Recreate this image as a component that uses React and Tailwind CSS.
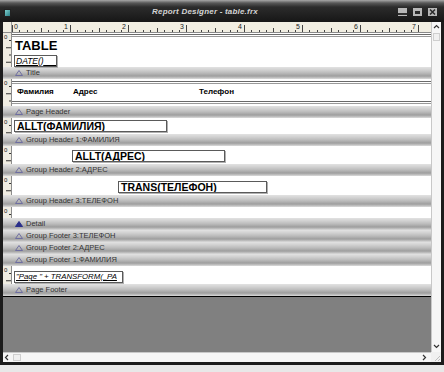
import React from "react";

const BAR =
  "bg-[linear-gradient(to_bottom,#e2e2e2_0%,#d0d0d0_25%,#bababa_50%,#9e9e9e_75%,#c6c6c6_92%,#dcdcdc_100%)]";

// vertical ruler piece at the left of every white band
function VRuler({ h }) {
  const ticks = [];
  for (let y = 7; y < h; y += 7.25) ticks.push(y);
  return (
    <div className="w-[9px] shrink-0 bg-[#efece2] border-r border-[#8c8c8c]">
      <svg width="8" height={h} className="block">
        <text x="1" y="6" fontSize="6" fontFamily="Liberation Sans, sans-serif" fill="#222">
          0
        </text>
        {ticks.map((y, i) => (
          <line key={i} x1={i % 2 ? 3 : 6} x2="8" y1={y + 0.5} y2={y + 0.5} stroke="#333" strokeWidth="1" />
        ))}
      </svg>
    </div>
  );
}

function Section({ h, className, children }) {
  return (
    <div className={`flex ${className}`}>
      <VRuler h={h} />
      <div className="flex-1 bg-white relative flex flex-col">{children}</div>
    </div>
  );
}

function Band({ label, filled }) {
  return (
    <div className={`h-[12px] flex items-center pl-[12px] ${BAR}`}>
      <svg width="8" height="6" className="mr-[3px]">
        <polygon
          points="4,0.5 7.5,5.5 0.5,5.5"
          fill={filled ? "#2a2f8a" : "none"}
          stroke={filled ? "#2a2f8a" : "#6e6ea0"}
          strokeWidth="1"
        />
      </svg>
      <span className="text-[7.5px] leading-none text-[#333]">{label}</span>
    </div>
  );
}

function Field({ className, children, italic }) {
  return (
    <div
      className={`h-[12px] border border-[#5a5a5a] shadow-[1px_1px_0_#b0b0b0] flex items-center pl-[1px] overflow-hidden ${className}`}
    >
      <span
        className={`leading-none underline text-black whitespace-nowrap ${
          italic ? "italic text-[7.8px] font-normal" : "text-[10.5px] font-bold pl-[1px]"
        }`}
      >
        {children}
      </span>
    </div>
  );
}

function Ruler() {
  const ticks = [];
  for (let i = 0; i <= 58; i++) {
    const x = 9 + i * 7.25;
    if (x > 418) break;
    const kind = i % 8 === 0 ? 3 : i % 4 === 0 ? 2 : 1;
    ticks.push({ x, kind });
  }
  return (
    <div className="h-[11px] bg-[#f1eee2] border-b border-[#8a8a8a]">
      <svg width="428" height="10" className="block">
        <line x1="8.5" y1="0" x2="8.5" y2="10" stroke="#9a9a9a" />
        {ticks.map((t, i) => (
          <line
            key={i}
            x1={Math.round(t.x) + 0.5}
            x2={Math.round(t.x) + 0.5}
            y1={t.kind === 3 ? 3 : t.kind === 2 ? 6 : 8}
            y2="10"
            stroke="#444"
          />
        ))}
        {[0, 1, 2, 3, 4, 5, 6, 7].map((n) => (
          <text
            key={n}
            x={n === 0 ? 11 : 9 + n * 58 - 6}
            y="7"
            fontSize="7"
            fontFamily="Liberation Sans, sans-serif"
            fill="#222"
          >
            {n}
          </text>
        ))}
      </svg>
    </div>
  );
}

export default function App() {
  return (
    <div className="w-[444px] h-[372px] bg-[#e8e8e8] overflow-hidden font-['Liberation_Sans',Arial,sans-serif]">
      {/* title bar */}
      <div className="h-[22px] flex items-center bg-[linear-gradient(to_bottom,#a8a8a8_0px,#585858_3px,#2c2c2c_7px,#161616_22px)]">
        <div className="ml-[4px] mt-[3px] w-[7px] h-[8px] border border-[#222] bg-[linear-gradient(135deg,#7fd0cf,#2a7f86)]" />
        <div className="flex-1 pl-[141px] pt-[2px] text-[8px] font-bold italic tracking-[0.2px] text-[#d4d4d4]">
          Report Designer - table.frx
        </div>
        <div className="flex items-center gap-[6px] mr-[7px] mt-[2px]">
          <div className="w-[9px] h-[8px] bg-[#b8b8b8] flex flex-col justify-end">
            <div className="h-[2px] bg-[#303030] mb-[1px]" />
          </div>
          <div className="w-[9px] h-[8px] bg-[#b8b8b8] p-[2px] pt-[3px]">
            <div className="w-full h-full bg-[#2a2a2a]" />
          </div>
          <svg width="9" height="8">
            <rect width="9" height="8" fill="#b8b8b8" />
            <path d="M2 1.5 L7 6.5 M7 1.5 L2 6.5" stroke="#2a2a2a" strokeWidth="1.5" />
          </svg>
        </div>
      </div>

      {/* body */}
      <div className="h-[330px] flex bg-[#1c1c1c] px-[3px]">
        <div className="w-[428px] flex flex-col bg-[#808080]">
          <Ruler />

          <Section h={34} className="h-[34px]">
            <div className="mt-[1px] h-[1px] bg-[#6a6a6a]" />
            <div className="mt-[1px] h-[1px] bg-[#9a9a9a]" />
            <div className="mt-[2px] ml-[3px] text-[13px] leading-[13px] font-bold text-black">TABLE</div>
            <Field italic className="ml-[2px] mt-[3px] w-[43px] h-[11px]">
              <span className="text-[8.5px]">DATE()</span>
              <span className="tracking-[1px]">{"\u00a0\u00a0\u00a0\u00a0\u00a0"}</span>
            </Field>
          </Section>
          <Band label="Title" />

          <Section h={27} className="h-[27px]">
            <div className="mt-[2px] h-[1px] bg-[#6a6a6a]" />
            <div className="mt-[1px] h-[1px] bg-[#9a9a9a]" />
            <div className="flex mt-[4px] text-[8px] leading-[8px] font-bold text-black">
              <span className="ml-[5px] w-[56px]">Фамилия</span>
              <span className="w-[126px]">Адрес</span>
              <span>Телефон</span>
            </div>
            <div className="mt-[5px] h-[1px] bg-[#6a6a6a]" />
            <div className="mt-[1px] h-[1px] bg-[#9a9a9a]" />
          </Section>
          <Band label="Page Header" />

          <Section h={16} className="h-[16px]">
            <Field className="ml-[2px] mt-[2px] w-[153px]">ALLT(ФАМИЛИЯ)</Field>
          </Section>
          <Band label="Group Header 1:ФАМИЛИЯ" />

          <Section h={18} className="h-[18px]">
            <Field className="ml-[60px] mt-[4px] w-[153px]">ALLT(АДРЕС)</Field>
          </Section>
          <Band label="Group Header 2:АДРЕС" />

          <Section h={19} className="h-[19px]">
            <Field className="ml-[106px] mt-[5px] w-[149px]">TRANS(ТЕЛЕФОН)</Field>
          </Section>
          <Band label="Group Header 3:ТЕЛЕФОН" />

          <Section h={11} className="h-[11px]" />
          <Band label="Detail" filled />
          <Band label="Group Footer 3:ТЕЛЕФОН" />
          <Band label="Group Footer 2:АДРЕС" />
          <Band label="Group Footer 1:ФАМИЛИЯ" />

          <Section h={18} className="h-[18px]">
            <Field italic className="ml-[2px] mt-[5px] w-[109px]">
              "Page " + TRANSFORM(_PA
            </Field>
          </Section>
          <Band label="Page Footer" />
          <div className="h-[1px] bg-black" />
          <div className="flex-1 bg-[#808080]" />
        </div>

        {/* vertical scrollbar */}
        <div className="w-[10px] bg-[#f6f6f6] border-l border-[#c8c8c8] flex flex-col items-center">
          <svg width="7" height="5" className="mt-[2px]">
            <path d="M1 4 L3.5 1.5 L6 4" stroke="#333" fill="none" strokeWidth="1.2" />
          </svg>
          <div className="mt-[4px] w-[7px] h-[8px] border border-[#cfcfcf] bg-[#f0f0f0]" />
          <div className="flex-1" />
          <svg width="7" height="5" className="mb-[3px]">
            <path d="M1 1 L3.5 3.5 L6 1" stroke="#333" fill="none" strokeWidth="1.2" />
          </svg>
        </div>
      </div>

      {/* horizontal scrollbar */}
      <div className="h-[10px] flex bg-[#1c1c1c] px-[3px]">
        <div className="w-[428px] bg-[#f6f6f6] border-t border-[#c8c8c8] flex items-center">
          <svg width="6" height="7" className="ml-[1px]">
            <path d="M4 1 L1.5 3.5 L4 6" stroke="#333" fill="none" strokeWidth="1.2" />
          </svg>
          <div className="ml-[3px] w-[8px] h-[7px] border border-[#cfcfcf] bg-[#f0f0f0]" />
          <div className="flex-1" />
          <svg width="6" height="7" className="mr-[4px]">
            <path d="M2 1 L4.5 3.5 L2 6" stroke="#333" fill="none" strokeWidth="1.2" />
          </svg>
        </div>
        <div className="w-[10px] bg-[#f0f0f0] flex items-end justify-end">
          <svg width="8" height="8">
            <path d="M7 2 L2 7 M7 5 L5 7" stroke="#bdbdbd" strokeWidth="1" />
          </svg>
        </div>
      </div>
      <div className="h-[3px] bg-[#1c1c1c]" />
    </div>
  );
}
